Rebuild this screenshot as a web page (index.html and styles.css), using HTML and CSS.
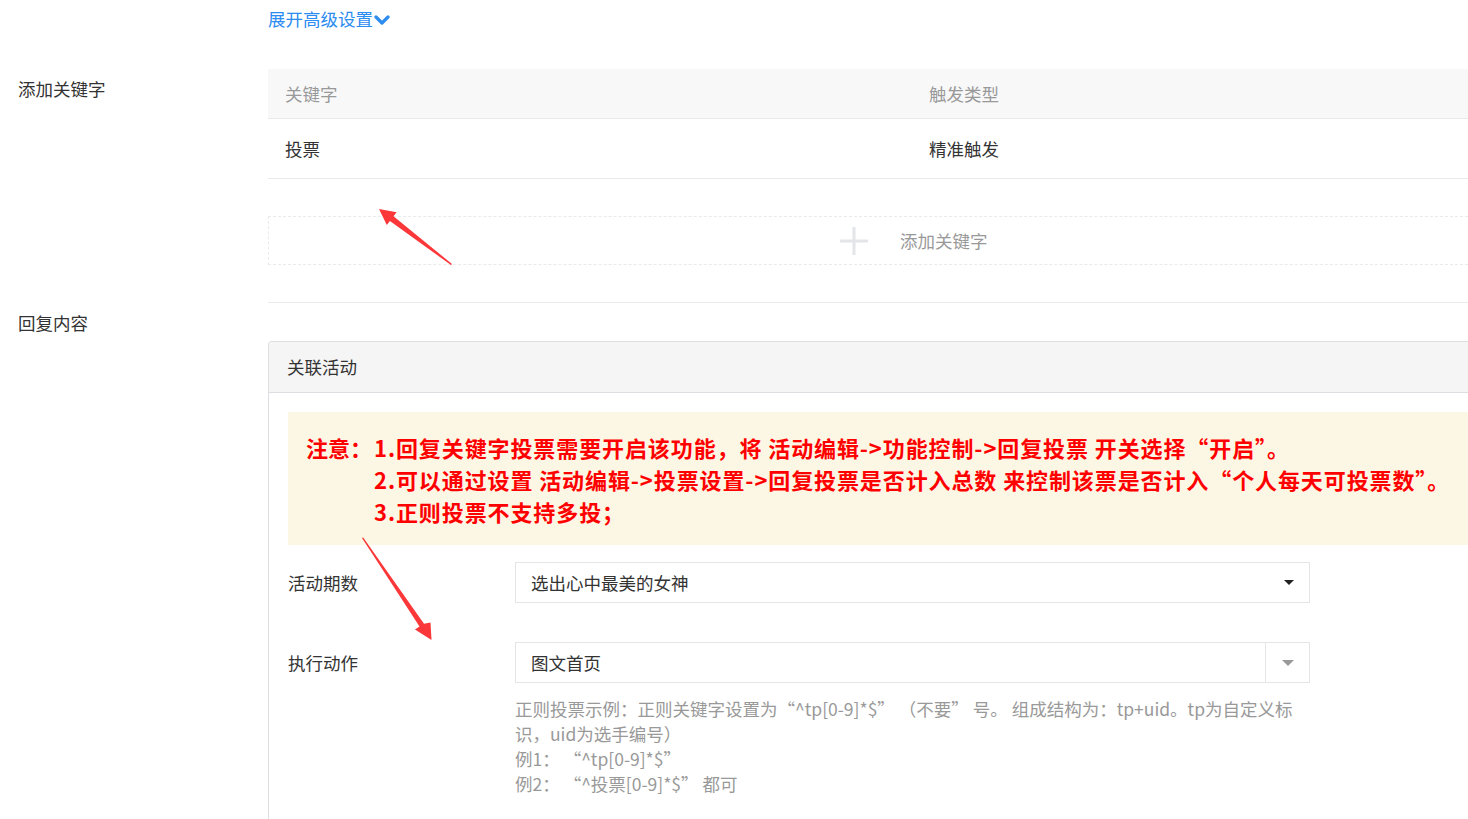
FILE: index.html
```html
<!DOCTYPE html>
<html>
<head>
  <meta charset="UTF-8">
  <link rel="stylesheet" href="styles.css">
</head>
<body>
  <div class="page">
    <div class="form-item advanced">
      <div class="item-label"></div>
      <div class="item-content">
        <a class="toggle-link">展开高级设置<svg class="chevron" width="16" height="12" viewBox="0 0 16 12"><path d="M2 3 L8 9 L14 3" fill="none" stroke="#2d8cf0" stroke-width="3.2" stroke-linecap="round" stroke-linejoin="round"/></svg></a>
      </div>
    </div>

    <div class="form-item">
      <div class="item-label">添加关键字</div>
      <div class="item-content keyword-block">
        <div class="kw-table">
          <div class="kw-head">
            <div class="kw-cell">关键字</div>
            <div class="kw-cell">触发类型</div>
          </div>
          <div class="kw-row">
            <div class="kw-cell">投票</div>
            <div class="kw-cell">精准触发</div>
          </div>
        </div>
        <div class="add-keyword">
          <div class="add-inner">
            <svg class="plus" width="28" height="28" viewBox="0 0 28 28"><path d="M14 0 V28 M0 14 H28" stroke="#e3e5e8" stroke-width="3"/></svg>
            <span>添加关键字</span>
          </div>
        </div>
      </div>
    </div>

    <div class="form-item">
      <div class="item-label">回复内容</div>
      <div class="item-content">
        <div class="panel">
          <div class="panel-head">关联活动</div>
          <div class="panel-body">
            <div class="notice">
              <div class="notice-title">注意：</div>
              <div class="notice-lines">
                <div>1.回复关键字投票需要开启该功能，将 活动编辑-&gt;功能控制-&gt;回复投票 开关选择“开启”。</div>
                <div>2.可以通过设置 活动编辑-&gt;投票设置-&gt;回复投票是否计入总数 来控制该票是否计入“个人每天可投票数”。</div>
                <div>3.正则投票不支持多投；</div>
              </div>
            </div>

            <div class="field first">
              <div class="field-label">活动期数</div>
              <div class="select">
                <span class="select-value">选出心中最美的女神</span>
                <span class="caret"></span>
              </div>
            </div>

            <div class="field">
              <div class="field-label">执行动作</div>
              <div class="field-main">
                <div class="select split">
                  <span class="select-value">图文首页</span>
                  <span class="select-btn"><span class="caret gray"></span></span>
                </div>
                <div class="help">
                  正则投票示例：正则关键字设置为“^tp[0-9]*$” （不要” 号。 组成结构为：tp+uid。tp为自定义标识，uid为选手编号）<br>
                  例1： “^tp[0-9]*$”<br>
                  例2： “^投票[0-9]*$” 都可
                </div>
              </div>
            </div>
          </div>
        </div>
      </div>
    </div>
  </div>

  <svg class="annotations" width="1468" height="819" viewBox="0 0 1468 819">
    <polygon points="379,209 396.6,212.3 393.5,216.3 452,264 451,265 389.9,221.1 386.8,225.1" fill="#fb3739"/>
    <polygon points="362,538 363.2,537.6 424,623.8 430.5,622.5 431.5,640 415,629.5 419.5,626.5" fill="#fb3739"/>
  </svg>
</body>
</html>
```

FILE: styles.css
```css
* {
  margin: 0;
  padding: 0;
  box-sizing: border-box;
}

body {
  font-family: 'Noto Sans CJK SC', 'Noto Sans', sans-serif;
  font-size: 17.5px;
  color: #333;
  background: #fff;
  overflow: hidden;
  position: relative;
  width: 1468px;
  height: 819px;
}

.page {
  width: 100%;
}

.form-item {
  display: flex;
}

.item-label {
  width: 268px;
  flex: none;
  padding-left: 18px;
  line-height: 40px;
}

.item-content {
  flex: 1;
  min-width: 0;
}

/* advanced toggle */
.advanced {
  margin-bottom: 31px;
}

.advanced .item-label {
  line-height: 38px;
}

.toggle-link {
  display: inline-flex;
  align-items: center;
  height: 38px;
  line-height: 36px;
  color: #2d8cf0;
  cursor: pointer;
}

.chevron {
  margin-left: 1px;
  margin-top: 1px;
}

/* keyword table */
.keyword-block {
  padding-bottom: 37px;
  border-bottom: 1px solid #e8eaec;
}

.kw-head,
.kw-row {
  display: grid;
  grid-template-columns: 644px 1fr;
  border-bottom: 1px solid #e8eaec;
}

.kw-head {
  height: 50px;
  background: #f8f8f9;
  color: #999;
}

.kw-row {
  height: 60px;
}

.kw-cell {
  display: flex;
  align-items: center;
  padding-left: 17px;
  padding-bottom: 1px;
}

.add-keyword {
  margin-top: 37px;
  height: 49px;
  border: 1px dashed #e8eaec;
  border-right: none;
  display: flex;
  align-items: center;
  padding-left: 571px;
  color: #999;
}

.add-inner {
  display: flex;
  align-items: center;
  gap: 32px;
}

.plus {
  display: block;
}

/* reply panel */
.panel {
  margin-top: 38px;
  border: 1px solid #dcdee2;
  border-right: none;
  border-bottom: none;
  border-radius: 4px 0 0 0;
  height: 480px;
}

.panel-head {
  height: 51px;
  line-height: 49px;
  padding-left: 18px;
  background: #f5f5f5;
  border-bottom: 1px solid #dcdee2;
  border-radius: 4px 0 0 0;
}

.panel-body {
  padding: 19px 0 0 19px;
}

.notice {
  display: flex;
  background: #fcf6e4;
  padding: 19px 18px 18px;
  color: #ff0000;
  font-weight: bold;
  font-size: 22px;
  line-height: 32px;
}

.notice-title {
  width: 68px;
  flex: none;
}

.notice-lines {
  white-space: nowrap;
  letter-spacing: 0.9px;
}

/* form fields */
.field {
  display: flex;
  margin-top: 39px;
}

.field.first {
  margin-top: 17px;
}

.field-label {
  width: 227px;
  flex: none;
  line-height: 41px;
}

.field-main {
  width: 795px;
}

.select {
  width: 795px;
  height: 41px;
  border: 1px solid #e5e5e5;
  display: flex;
  align-items: center;
  justify-content: space-between;
  padding-left: 15px;
  padding-right: 15px;
}

.select.split {
  padding-right: 0;
}

.select-btn {
  width: 44px;
  height: 39px;
  border-left: 1px solid #e5e5e5;
  display: flex;
  justify-content: center;
  align-items: center;
}

.caret {
  width: 0;
  height: 0;
  border-left: 5px solid transparent;
  border-right: 5px solid transparent;
  border-top: 5px solid #222;
}

.caret.gray {
  border-left-width: 6px;
  border-right-width: 6px;
  border-top: 6px solid #999;
}

.help {
  margin-top: 13px;
  line-height: 25px;
  color: #999;
}

.annotations {
  position: absolute;
  top: 0;
  left: 0;
  pointer-events: none;
}
```
